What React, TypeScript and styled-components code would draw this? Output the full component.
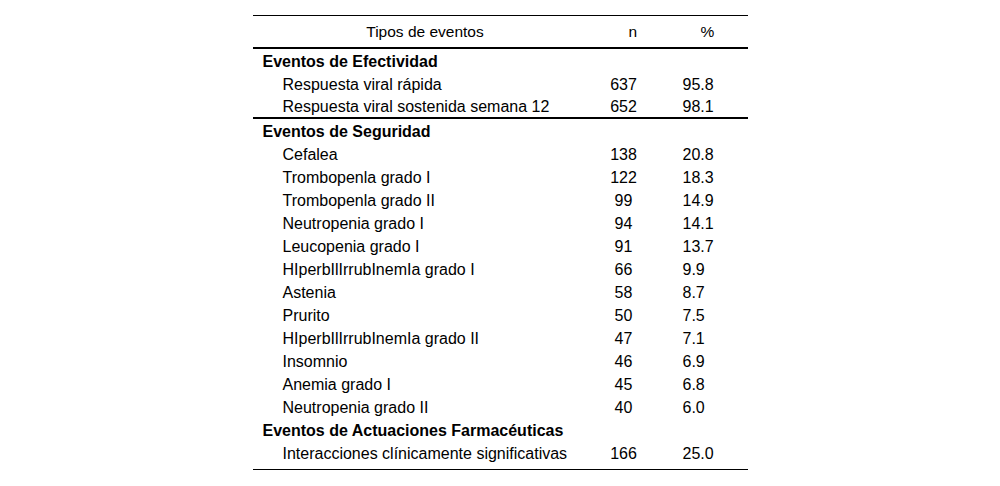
import React from "react";
import styled, { createGlobalStyle } from "styled-components";

interface EventRow {
  name: string;
  n: number;
  pct: string;
}

interface EventGroup {
  title: string;
  ruled: boolean;
  rows: EventRow[];
}

const groups: EventGroup[] = [
  {
    title: "Eventos de Efectividad",
    ruled: true,
    rows: [
      { name: "Respuesta viral rápida", n: 637, pct: "95.8" },
      { name: "Respuesta viral sostenida semana 12", n: 652, pct: "98.1" },
    ],
  },
  {
    title: "Eventos de Seguridad",
    ruled: false,
    rows: [
      { name: "Cefalea", n: 138, pct: "20.8" },
      { name: "Trombopenla grado I", n: 122, pct: "18.3" },
      { name: "Trombopenla grado II", n: 99, pct: "14.9" },
      { name: "Neutropenia grado I", n: 94, pct: "14.1" },
      { name: "Leucopenia grado I", n: 91, pct: "13.7" },
      { name: "HIperbIlIrrubInemIa grado I", n: 66, pct: "9.9" },
      { name: "Astenia", n: 58, pct: "8.7" },
      { name: "Prurito", n: 50, pct: "7.5" },
      { name: "HIperbIlIrrubInemIa grado II", n: 47, pct: "7.1" },
      { name: "Insomnio", n: 46, pct: "6.9" },
      { name: "Anemia grado I", n: 45, pct: "6.8" },
      { name: "Neutropenia grado II", n: 40, pct: "6.0" },
    ],
  },
  {
    title: "Eventos de Actuaciones Farmacéuticas",
    ruled: false,
    rows: [{ name: "Interacciones clínicamente significativas", n: 166, pct: "25.0" }],
  },
];

const App = () => {
  return (
    <>
      <GlobalStyle />
      <Page>
        <Table>
          <colgroup>
            <Col $width={345} />
            <Col $width={68} />
            <Col $width={82} />
          </colgroup>
          <thead>
            <tr>
              <HeadCell>Tipos de eventos</HeadCell>
              <HeadCell $pad={31}>n</HeadCell>
              <HeadCell $pad={35}>%</HeadCell>
            </tr>
          </thead>
          {groups.map((group) => (
            <Section key={group.title} $ruled={group.ruled}>
              <tr>
                <NameCell $group>{group.title}</NameCell>
                <NumCell />
                <PctCell />
              </tr>
              {group.rows.map((row) => (
                <tr key={row.name}>
                  <NameCell>{row.name}</NameCell>
                  <NumCell>{row.n}</NumCell>
                  <PctCell>{row.pct}</PctCell>
                </tr>
              ))}
            </Section>
          ))}
        </Table>
      </Page>
    </>
  );
};

const GlobalStyle = createGlobalStyle`
  body {
    margin: 0;
    background: #ffffff;
    color: #000000;
    font-family: "Liberation Sans", Arial, sans-serif;
  }
`;

const Page = styled.div`
  display: flex;
  justify-content: center;
  padding-top: 15px;
`;

const Table = styled.table`
  width: 495px;
  table-layout: fixed;
  border-collapse: separate;
  border-spacing: 0;
  border-top: 1px solid #000000;
  border-bottom: 1px solid #000000;
  font-size: 16px;
`;

const Col = styled.col<{ $width: number }>`
  width: ${(p) => p.$width}px;
`;

const HeadCell = styled.th<{ $pad?: number }>`
  height: 31px;
  padding: 0 0 0 ${(p) => p.$pad ?? 0}px;
  font-size: 15.5px;
  font-weight: 400;
  text-align: ${(p) => (p.$pad ? "left" : "center")};
  vertical-align: middle;
  border-bottom: 2px solid #000000;
  box-sizing: border-box;
  line-height: 31px;
`;

const Section = styled.tbody<{ $ruled: boolean }>`
  td {
    height: 21px;
    line-height: 21px;
    padding-top: 2px;
    padding-bottom: 0;
    white-space: nowrap;
    vertical-align: top;
  }

  ${(p) =>
    p.$ruled &&
    `
    tr:last-child td {
      height: 20px;
      line-height: 20px;
      border-bottom: 2px solid #000000;
    }
  `}

  &:last-of-type tr:last-child td {
    padding-bottom: 5px;
  }
`;

const NameCell = styled.td<{ $group?: boolean }>`
  padding-left: ${(p) => (p.$group ? 10 : 30)}px;
  padding-right: 0;
  font-weight: ${(p) => (p.$group ? 700 : 400)};
`;

const NumCell = styled.td`
  text-align: center;
  padding-left: 0;
  padding-right: 16px;
`;

const PctCell = styled.td`
  text-align: left;
  padding-left: 17px;
  padding-right: 0;
`;

export default App;
